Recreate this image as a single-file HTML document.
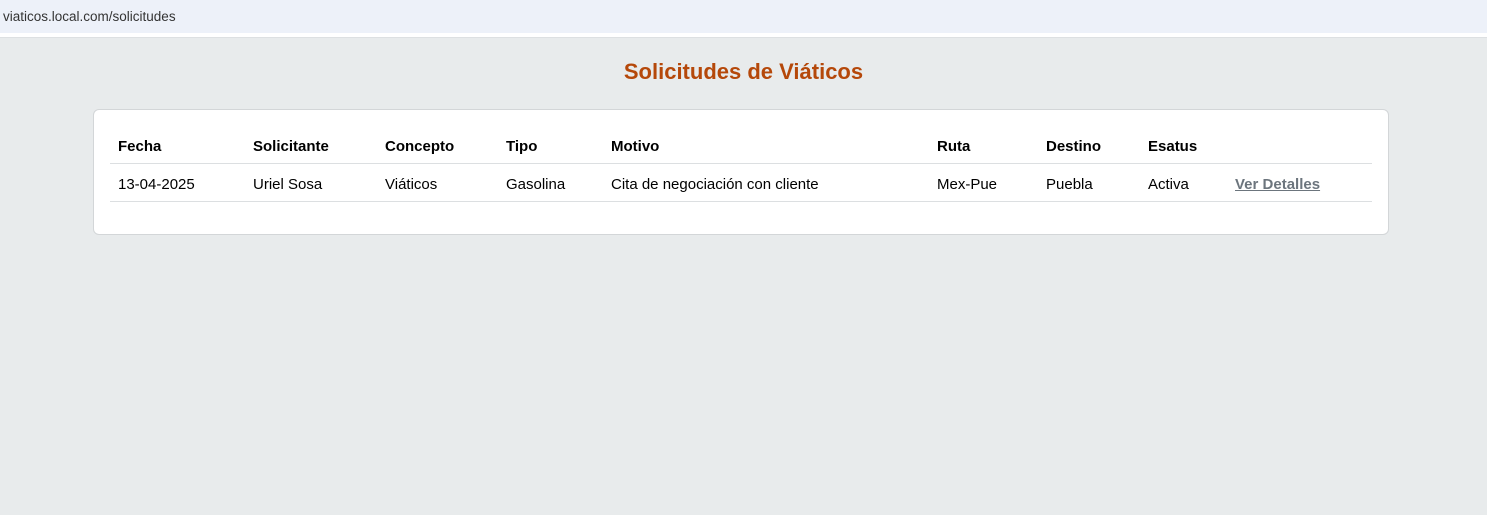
<!DOCTYPE html>
<html><head><meta charset="utf-8"><style>
*{margin:0;padding:0;box-sizing:border-box}
body{width:1487px;height:515px;background:#e8ebec;font-family:"Liberation Sans",sans-serif;position:relative;overflow:hidden}
.bar{position:absolute;left:0;top:0;width:1487px;height:33px;background:#edf1f9;font-size:13.5px;color:#333;padding:9px 0 0 3px}
.wh{position:absolute;left:0;top:33px;width:1487px;height:5px;background:#fff;border-bottom:1px solid #dde0e2}
h1{position:absolute;top:59px;left:0;width:1487px;text-align:center;font-size:22px;font-weight:bold;color:#b5480a}
.card{position:absolute;left:93px;top:109px;width:1296px;height:126px;background:#fff;border:1px solid #d3d6d8;border-radius:6px}
.t{position:absolute;font-size:15px;color:#000;white-space:nowrap}
.b{font-weight:bold}
.ln{position:absolute;left:110px;width:1262px;height:1px;background:#dcdfe1}
a{color:#6c757d;font-weight:bold;text-decoration:underline}
</style></head><body>
<div class="bar">viaticos.local.com/solicitudes</div>
<div class="wh"></div>
<h1>Solicitudes de Viáticos</h1>
<div class="card"></div>
<div class="t b" style="left:118px;top:138px">Fecha</div>
<div class="t b" style="left:253px;top:138px">Solicitante</div>
<div class="t b" style="left:385px;top:138px">Concepto</div>
<div class="t b" style="left:506px;top:138px">Tipo</div>
<div class="t b" style="left:611px;top:138px">Motivo</div>
<div class="t b" style="left:937px;top:138px">Ruta</div>
<div class="t b" style="left:1046px;top:138px">Destino</div>
<div class="t b" style="left:1148px;top:138px">Esatus</div>
<div class="ln" style="top:163px"></div>
<div class="t" style="left:118px;top:176px">13-04-2025</div>
<div class="t" style="left:253px;top:176px">Uriel Sosa</div>
<div class="t" style="left:385px;top:176px">Viáticos</div>
<div class="t" style="left:506px;top:176px">Gasolina</div>
<div class="t" style="left:611px;top:176px">Cita de negociación con cliente</div>
<div class="t" style="left:937px;top:176px">Mex-Pue</div>
<div class="t" style="left:1046px;top:176px">Puebla</div>
<div class="t" style="left:1148px;top:176px">Activa</div>
<div class="t" style="left:1235px;top:176px"><a>Ver Detalles</a></div>
<div class="ln" style="top:201px"></div>
</body></html>
